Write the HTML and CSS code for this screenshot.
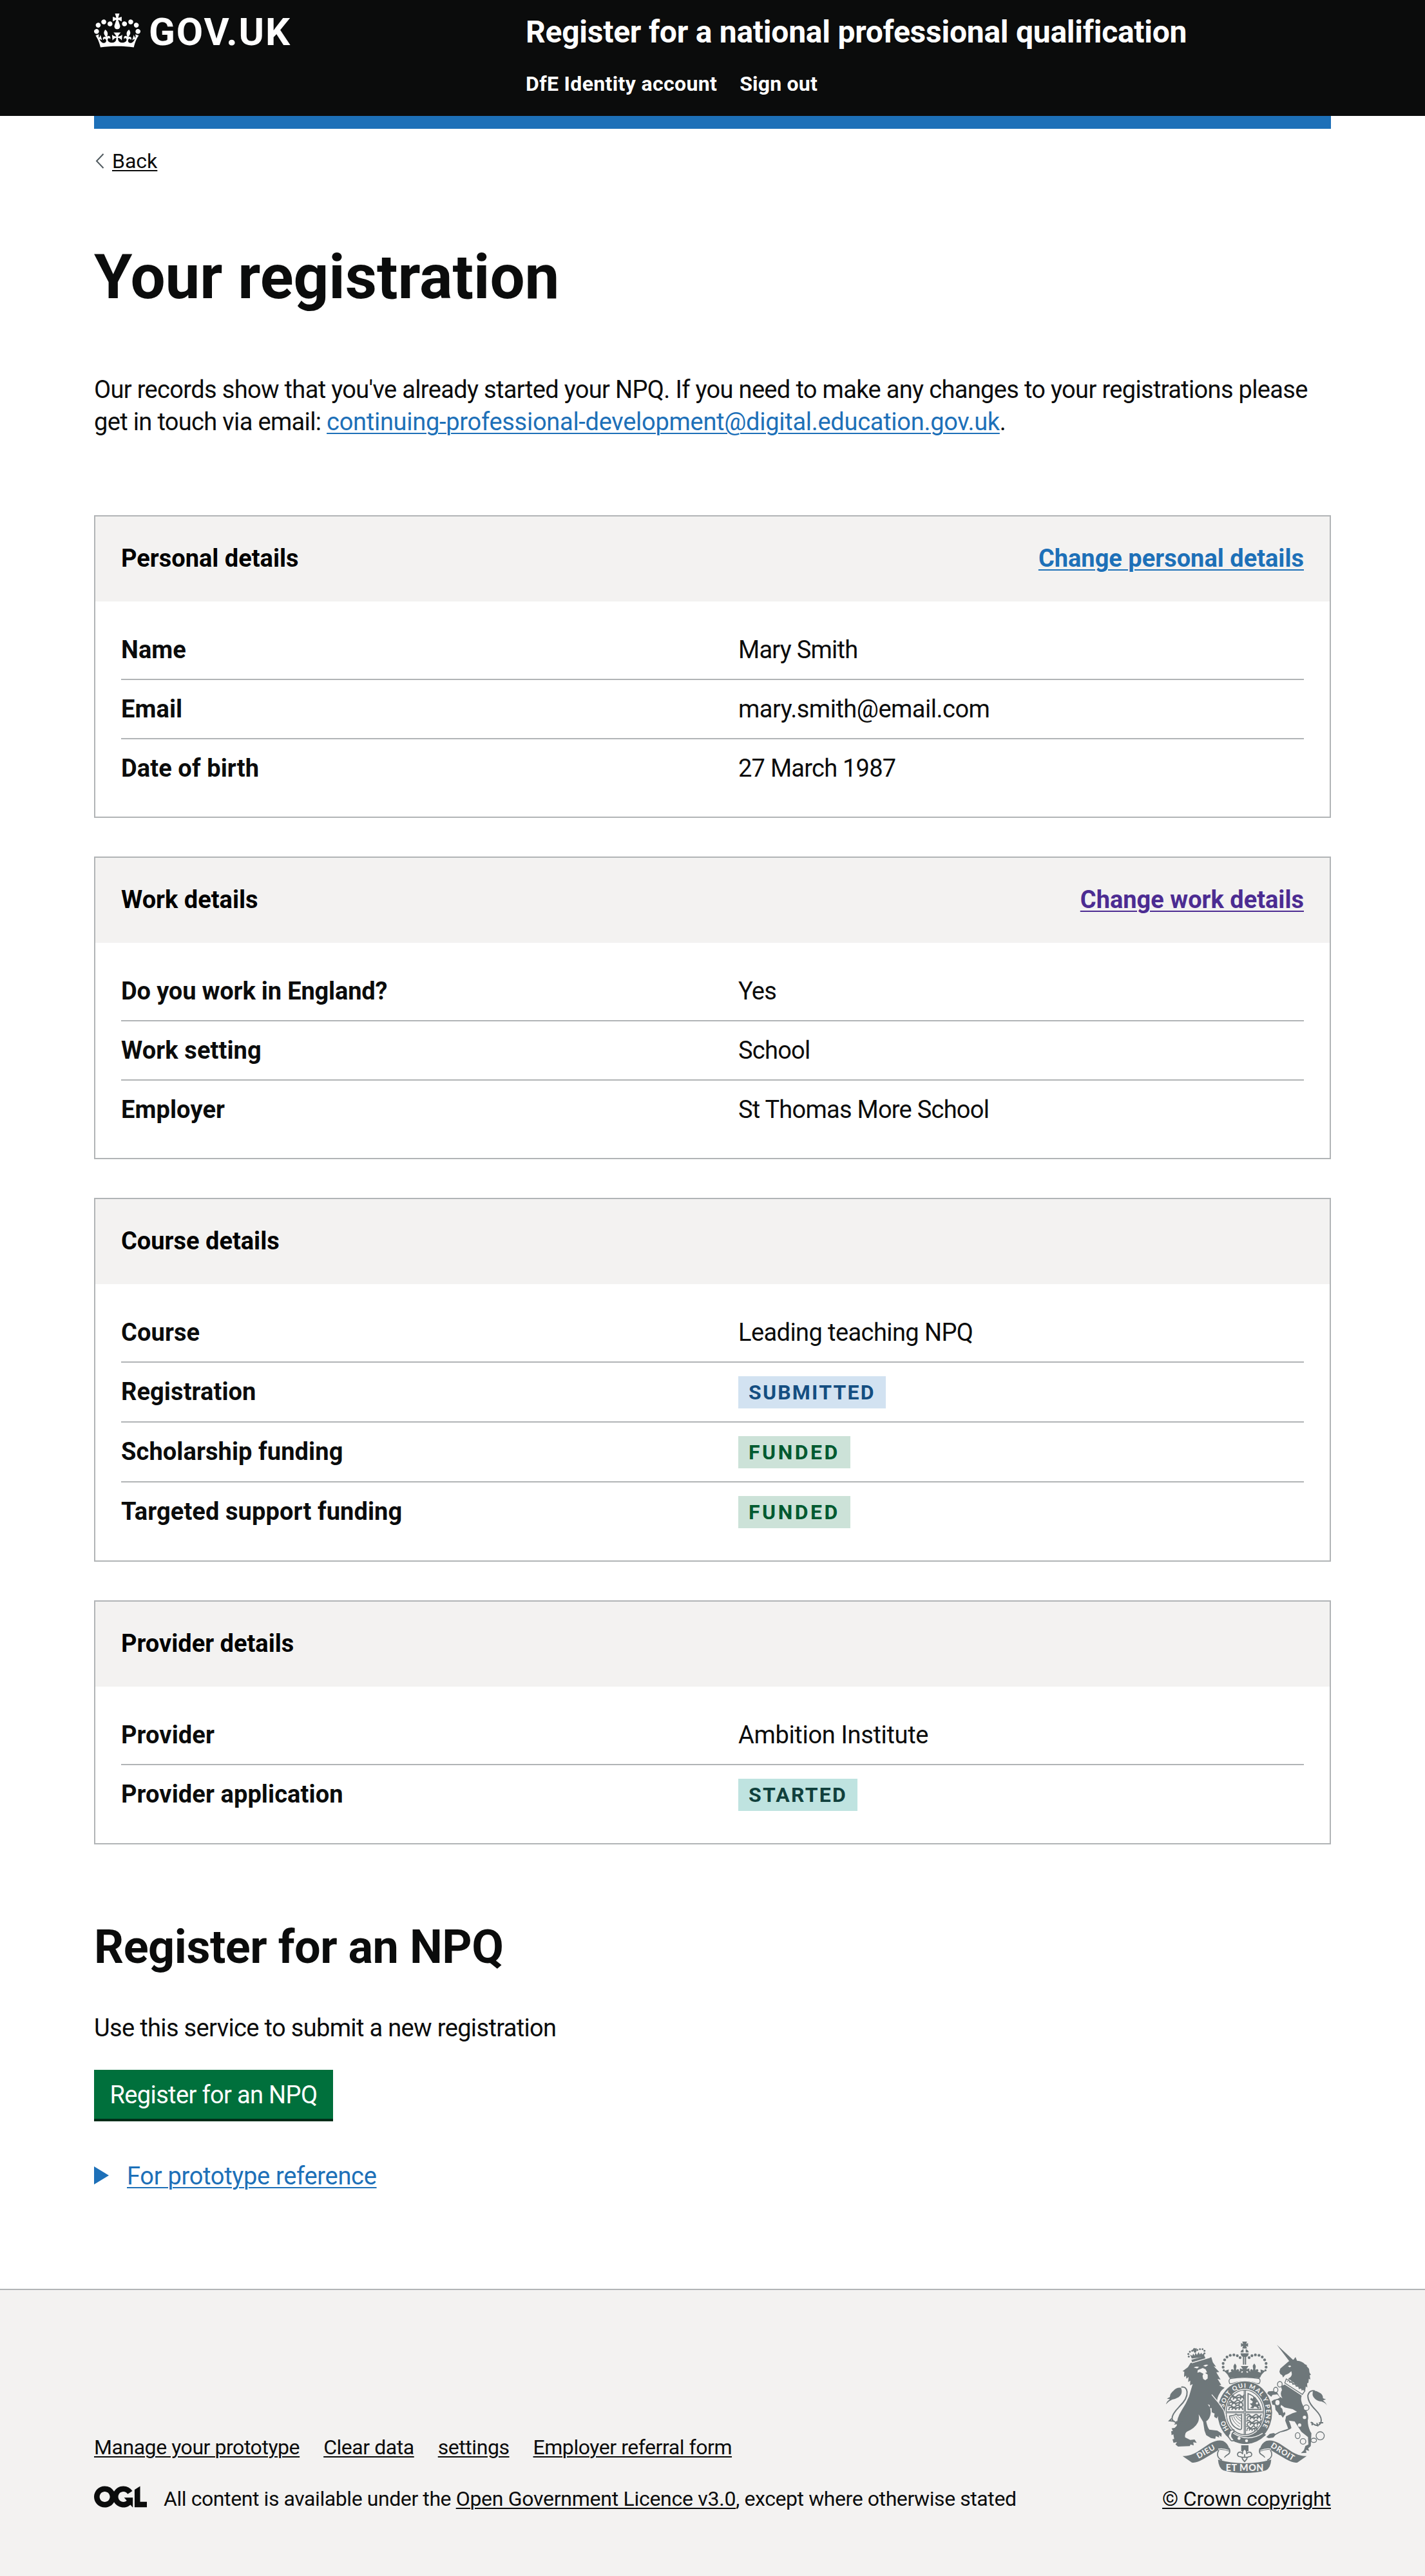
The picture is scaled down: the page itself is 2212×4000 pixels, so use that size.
FILE: index.html
```html
<!DOCTYPE html>
<html lang="en">
<head>
<meta charset="utf-8">
<title>Your registration - Register for a national professional qualification</title>
<link rel="stylesheet" href="styles.css">
</head>
<body>
<header class="header">
  <div class="width header-inner">
    <a class="logo" href="#">
      <svg class="crown" viewBox="0 0 132 97" aria-hidden="true"><path fill="currentColor" fill-rule="evenodd" d="M25 30.2c3.5 1.5 7.7-.2 9.1-3.7 1.5-3.6-.2-7.8-3.9-9.2-3.6-1.4-7.6.3-9.1 3.9-1.4 3.5.3 7.5 3.9 9zM9 39.5c3.6 1.5 7.8-.2 9.2-3.7 1.5-3.6-.2-7.8-3.9-9.1-3.6-1.5-7.6.2-9.1 3.8-1.4 3.5.3 7.5 3.8 9zM4.4 57.2c3.5 1.5 7.7-.2 9.1-3.8 1.5-3.6-.2-7.7-3.9-9.1-3.5-1.5-7.6.3-9.1 3.8-1.4 3.5.3 7.6 3.9 9.1zm38.3-21.4c3.5 1.5 7.7-.2 9.1-3.8 1.5-3.6-.2-7.7-3.9-9.1-3.6-1.5-7.6.3-9.1 3.8-1.3 3.6.4 7.7 3.9 9.1zm64.4-5.6c-3.6 1.5-7.8-.2-9.1-3.7-1.5-3.6.2-7.8 3.8-9.2 3.6-1.4 7.7.3 9.2 3.9 1.3 3.5-.4 7.5-3.9 9zm15.9 9.3c-3.6 1.5-7.7-.2-9.1-3.7-1.5-3.6.2-7.8 3.7-9.1 3.6-1.5 7.7.2 9.2 3.8 1.5 3.5-.3 7.5-3.8 9zm4.7 17.7c-3.6 1.5-7.8-.2-9.2-3.8-1.5-3.6.2-7.7 3.9-9.1 3.6-1.5 7.7.3 9.2 3.8 1.3 3.5-.4 7.6-3.9 9.1zM89.3 35.8c-3.6 1.5-7.8-.2-9.2-3.8-1.4-3.6.2-7.7 3.9-9.1 3.6-1.5 7.7.3 9.2 3.8 1.4 3.6-.3 7.7-3.9 9.1zM69.7 17.7l8.9 4.7V9.3l-8.9 2.8c-.2-.3-.5-.6-.9-.9L72.4 0H59.6l3.5 11.2c-.3.3-.6.5-.9.9l-8.8-2.8v13.1l8.8-4.7c.3.3.6.7.9.9l-5 15.4v.1c-.2.8-.4 1.6-.4 2.4 0 4.1 3.1 7.5 7 8.1h.2c.3 0 .7.1 1 .1.4 0 .7 0 1-.1h.2c4-.6 7.1-4.1 7.1-8.1 0-.8-.1-1.7-.4-2.4V34l-5.1-15.4c.4-.2.7-.6 1-.9zM66 92.8c16.9 0 32.8 1.1 47.1 3.2 4-16.9 8.9-26.7 14-33.5l-9.6-3.4c1 4.9 1.1 7.2 0 10.2-1.5-1.4-3-4.3-4.2-8.7L108.6 76c2.8-2 5-3.2 7.5-3.3-4.4 9.4-10 11.9-13.6 11.2-4.3-.8-6.3-4.6-5.6-7.9 1-4.7 5.7-5.9 8-.5 4.3-8.7-3-11.4-7.6-8.8 7.1-7.2 7.9-13.5 2.1-21.1-8 6.1-8.1 12.3-4.5 20.8-4.7-5.4-12.1-2.5-9.5 6.2 3.4-5.2 7.9-2 7.2 3.1-.6 4.3-6.4 7.8-13.5 7.2-10.3-.9-10.9-8-11.2-13.8 2.5-.5 7.1 1.8 11 7.3L80.2 60c-4.1 4.4-8 5.3-12.3 5.4 1.4-4.4 8-11.6 8-11.6H55.5s6.4 7.2 7.9 11.6c-4.2-.1-8-1-12.3-5.4l1.4 16.4c3.9-5.5 8.5-7.7 10.9-7.3-.3 5.8-.9 12.8-11.1 13.8-7.2.6-12.9-2.9-13.5-7.2-.7-5 3.8-8.3 7.1-3.1 2.7-8.7-4.6-11.6-9.4-6.2 3.7-8.5 3.6-14.7-4.6-20.8-5.8 7.6-5 13.9 2.2 21.1-4.7-2.6-11.9.1-7.7 8.8 2.3-5.5 7.1-4.2 8.1.5.7 3.3-1.3 7.1-5.7 7.9-3.5.7-9-1.8-13.5-11.2 2.5.1 4.7 1.3 7.5 3.3l-4.7-15.4c-1.2 4.4-2.7 7.2-4.3 8.7-1.1-3-.9-5.3 0-10.2l-9.5 3.4c5 6.9 9.9 16.7 14 33.5 14.8-2.1 30.8-3.2 47.7-3.2z"/></svg>
      <span class="logo-text">GOV.UK</span>
    </a>
    <div class="header-content">
      <a class="service-name" href="#">Register for a national professional qualification</a>
      <nav class="header-nav"><a class="nav-account" href="#">DfE Identity account</a><a class="nav-signout" href="#">Sign out</a></nav>
    </div>
  </div>
</header>
<div class="width"><div class="header-bar"></div></div>

<div class="width page">
  <a class="back" href="#"><svg class="chevron" viewBox="0 0 14 24" aria-hidden="true"><path d="M12.5 1 2 12l10.500 11" fill="none" stroke="#505a5f" stroke-width="2"/></svg><span class="back-text">Back</span></a>
  <main>
    <h1>Your registration</h1>
    <p class="intro">Our records show that you've already started your NPQ. If you need to make any changes to your registrations please<br>get in touch via email: <a class="link mail" href="#">continuing-professional-development@digital.education.gov.uk</a>.</p>

    <section class="card">
      <div class="card-head"><h2 class="card-title">Personal details</h2><a class="link" href="#">Change personal details</a></div>
      <dl class="rows">
        <div class="row"><dt>Name</dt><dd>Mary Smith</dd></div>
        <div class="row"><dt>Email</dt><dd class="value-mail">mary.smith@email.com</dd></div>
        <div class="row"><dt>Date of birth</dt><dd>27 March 1987</dd></div>
      </dl>
    </section>

    <section class="card">
      <div class="card-head"><h2 class="card-title">Work details</h2><a class="link visited" href="#">Change work details</a></div>
      <dl class="rows">
        <div class="row"><dt class="question">Do you work in England?</dt><dd>Yes</dd></div>
        <div class="row"><dt>Work setting</dt><dd>School</dd></div>
        <div class="row"><dt>Employer</dt><dd>St Thomas More School</dd></div>
      </dl>
    </section>

    <section class="card">
      <div class="card-head"><h2 class="card-title">Course details</h2></div>
      <dl class="rows">
        <div class="row"><dt>Course</dt><dd class="value-course">Leading teaching NPQ</dd></div>
        <div class="row"><dt>Registration</dt><dd><strong class="tag tag-blue">SUBMITTED</strong></dd></div>
        <div class="row"><dt>Scholarship funding</dt><dd><strong class="tag tag-green">FUNDED</strong></dd></div>
        <div class="row"><dt>Targeted support funding</dt><dd><strong class="tag tag-green">FUNDED</strong></dd></div>
      </dl>
    </section>

    <section class="card">
      <div class="card-head"><h2 class="card-title">Provider details</h2></div>
      <dl class="rows">
        <div class="row"><dt>Provider</dt><dd class="value-provider">Ambition Institute</dd></div>
        <div class="row"><dt>Provider application</dt><dd><strong class="tag tag-teal">STARTED</strong></dd></div>
      </dl>
    </section>

    <h2 class="section-title">Register for an NPQ</h2>
    <p class="lead">Use this service to submit a new registration</p>
    <a class="button" href="#">Register for an NPQ</a>
    <div class="details"><svg class="triangle" viewBox="0 0 23 28" aria-hidden="true"><path d="M0 0 23 14 0 28z" fill="currentColor"/></svg><a class="link details-text" href="#">For prototype reference</a></div>
  </main>
</div>

<footer class="footer">
  <div class="width footer-inner">
    <div class="footer-main">
      <nav class="footer-links"><a href="#">Manage your prototype</a><a href="#">Clear data</a><a href="#">settings</a><a href="#">Employer referral form</a></nav>
      <div class="licence">
        <svg class="ogl" viewBox="0 0 483.200 195.700" role="img" aria-label="Open Government Licence"><path fill="currentColor" d="M421.5 142.8V.1l-50.7 32.3v161.1h112.4v-50.7zm-122.3-9.6A47.12 47.12 0 0 1 221 97.8c0-26 21.1-47.1 47.1-47.1 16.7 0 31.4 8.7 39.7 21.8l42.7-27.2A97.63 97.63 0 0 0 268.1 0c-36.5 0-68.3 20.1-85.1 49.7A98 98 0 0 0 97.8 0C43.900 0 0 43.900 0 97.800s43.900 97.800 97.800 97.800c36.500 0 68.300-20.100 85.100-49.700a97.760 97.760 0 0 0 149.600 25.400l19.400 22.200h3v-87.800h-80l24.300 27.500zM97.800 145c-26 0-47.100-21.100-47.100-47.100s21.100-47.100 47.100-47.100 47.100 21.100 47.100 47.100S123.800 145 97.800 145"/></svg>
        <span class="licence-text">All content is available under the <a class="licence-link" href="#">Open Government Licence v3.0</a>, except where otherwise stated</span>
      </div>
    </div>
    <a class="copyright" href="#">
      <svg class="crest" viewBox="30 30 750 618" role="img" aria-label="Royal coat of arms">
        <defs>
          <path id="motto" d="M327 446A99 116 0 0 1 397 248A99 116 0 0 1 467 446"/>
          <g id="beast" fill="none" stroke="currentColor" stroke-width="6"><path d="M0 8q10-10 18 0t18 0t18 0t16-6M4 17q10-8 16-3t16 3t16-3t16 3M6 19l-4 7M22 17l-5 8M38 19l-4 7M54 17l-4 8M66 17l2 8"/></g>
          <g id="crown-side">
            <circle cx="296" cy="152" r="6.500"/><circle cx="296" cy="135" r="6.500"/><circle cx="303" cy="118" r="6.500"/><circle cx="314" cy="105" r="6.500"/><circle cx="329" cy="97" r="6.500"/><circle cx="346" cy="95" r="6.500"/><circle cx="362" cy="99" r="6.500"/><circle cx="375" cy="108" r="6.500"/><circle cx="299" cy="167" r="5"/>
            <path d="M300 170l22-7-1 15 14-5q-7-8 2-12 6 0 8 6 2-8-1-16 0-8 7-16 8 8 7 16-3 8-1 16 3-6 8-6 9 4 3 12l12-7v35h-56q-6-17-24-31z"/>
          </g>
          <g id="ribbon">
            <path d="M107 566q30 2 66-18l61-40q35-20 62-12 20 10 28 34 3 9 2 16-28-12-51-8l-70 42q-35 20-55 16-20-14-43-30z"/>
            <path d="M276 539q-9 14-5 27 4 12 20 20M324 530q9 22-9 31-10 6-13 12" fill="none" stroke="currentColor" stroke-width="5"/>
            <path d="M273 534q20-6 50 6" fill="none" stroke="#f3f2f1" stroke-width="4"/>
          </g>
        </defs>
        <g fill="currentColor">
          <!-- royal crown -->
          <path d="M385 33h22l-4 11 9-4v17l-9-4 4 12h-22l4-12-10 4V40l10 4zM377 83q1-11 14-15v15zM415 83q-1-11-14-15v15zM377 88h38q-2 16-12 16v36h-6v-36h-3v36h-6v-36q-9-2-11-16z"/>
          <use href="#crown-side"/><use href="#crown-side" transform="translate(792 0) scale(-1 1)"/>
          <path d="M378 147h36l-10 15 14-4v17l-14-5 3 15h-22l3-15-14 5v-17l14 4zM324 184q72-14 144 0l-3 20q-69-11-138 0z"/>
          <path d="M328 206q68-12 137 0 7 11-1 22l-10 1q-58-22-117 0h-10q-8-13 1-23z" fill="none" stroke="currentColor" stroke-width="4"/>
          <!-- lion -->
          <path d="M132 152l12-19 97-27 7 24 15 20-11-2 26 27-14 1 20 34-14-3 17 28-10 2 26 11q-17 12-22 24-14 20-14 47l30 44 4 32-14-2-2-10-3 11-10-5-4-12-6 8-8-8 4-12-15-6 3-17-14 2 2-15-10-4q15 18 14 40-3 28-21 39 6 30 15 39l37 5 20 13-1 16-12-8 2 11-16-7-3 13-20-4-22-13-8-22-6-40-21-35q4 25-4 38-14 27-50 42-12 8-9 27l24 12 20-2 10 16-16-3 2 15-15-5-3 8-55 2-12-10 7-11-16 4-5-17 8-1-4-22-8 4-2-18 8-2-6-12 14-2 10-10q0-36 22-70 22-33 35-66l17-58-12 6 1-22-10 6 2-23-10 8-2-14-9 6 1-25-8-2z"/>
          <path d="M148 118l62-17 4 12-62 17z"/>
          <path d="M150 112l-8-18 10 5 5-10 6 10 4-14 7 10 8-13 5 11 8-8 3 8 9-5 2 16z"/>
          <g><circle cx="136" cy="103" r="4.500"/><circle cx="134" cy="91" r="4.500"/><circle cx="141" cy="80" r="4.500"/><circle cx="152" cy="76" r="4.500"/><circle cx="176" cy="72" r="4.500"/><circle cx="188" cy="68" r="4.500"/><circle cx="200" cy="68" r="4.500"/><circle cx="209" cy="76" r="4.500"/><circle cx="209" cy="88" r="4.500"/><path d="M160 62l6 3 6-2 1 10-4 12h-7l-4-8-5-5z"/></g>
          <path d="M159 154q10-8 25-3l-9 7zM203 146q12-9 24-4l-12 8zM178 166l23-10 13 6 7 14-9 3 12 8v18l-11 8-10-6-3-14 4-10-16-8-12 3z" fill="#f3f2f1"/>
          <path d="M150 132l84-25" fill="none" stroke="#f3f2f1" stroke-width="4"/>
          <path d="M110 409q-45 8-52-16-2-20 33-56 40-38 37-70-4-26-27-22M56 392l-10 10 24 2M82 404l-8 12 26-5" fill="none" stroke="currentColor" stroke-width="6"/>
          <path d="M29 326q4-14 19-25l-14-2 14-8q0-16 17-29 12-16 35-14 10 28-11 44-13 8-30 11-17 7-30 23z"/>
          <!-- unicorn -->
          <path d="M546 48l80 74-19 6zM558 173l4-14 38-33q12-9 24-9l9-12 7 17q25 2 36 16l12 6-4 2 12 14 2 16 7 12-6 2 3 20-7-4-2 19-6 2 1 20-7-5-3 20-30-20-49-37q24-10 14-34-10 12-28 17l-10 12-4-10-9-6z"/>
          <path d="M598 148q8-7 15 0l-7 5z" fill="#f3f2f1"/>
          <path d="M590 207l87 55-12 17-82-53zM594 219l8-8 4 12 10-4 5 13 11-4 4 13 11-3 3 14 12-3 1 12" fill="#f3f2f1" stroke="currentColor" stroke-width="4"/>
          <path d="M565 240l18-7 79 52q-10 23 13 58 23 31 15 57 0 28 12 52l5 8-3 60-12 10 5 12-16-4 3 13-26 2 14-14 7-20 14-7-2-34-31-25-16-25-15-23-27-4q10 22 12 35-15 14-52 20l-22 12-10 12-22 3-11-5 16-15 18-4 8 4 18-10 42-14-14-38 4-20 30-14 21-7-20-12-38-8-16-12-3 10 8 8 5 20 7-6 3 10-12 18-8-12-10-1-4-10-12-14-3-22-12-3-4-15 12-7 14-3 14-7-13-15-22 2-6 9-13-11-8-2 8-12 21-2 20 8 10 18 14 8q-14-20-2-38z"/>
          <path d="M704 408q30 26 44 8 16-26-21-64-40-40-36-70 8-25 32-19M712 408l-2 15M732 412l6 16M742 412l20-1" fill="none" stroke="currentColor" stroke-width="6"/>
          <path d="M780 331q-4-12-19-24l14-5-14-5q0-20-18-27-10-8-27-9-11 21 8 39 14 12 30 12 16 4 26 19z"/>
          <g fill="#f3f2f1"><circle cx="675" cy="386" r="8"/><circle cx="652" cy="422" r="8"/></g>
          <g fill="#f3f2f1" stroke="currentColor" stroke-width="4"><ellipse cx="560" cy="232" rx="11" ry="13"/><ellipse cx="541" cy="258" rx="10" ry="12"/><ellipse cx="549" cy="317" rx="12" ry="14"/><circle cx="683" cy="341" r="13"/><ellipse cx="643" cy="471" rx="11" ry="14"/><circle cx="668" cy="498" r="13"/><ellipse cx="718" cy="493" rx="13" ry="10"/><circle cx="748" cy="472" r="19"/></g>
          <!-- garter and shield -->
          <ellipse cx="397" cy="365" rx="132" ry="150" fill="#f3f2f1"/>
          <ellipse cx="397" cy="364" rx="127" ry="146"/>
          <ellipse cx="397" cy="363" rx="93" ry="110" fill="#f3f2f1"/>
          <ellipse cx="397" cy="363" rx="87" ry="104" fill="none" stroke="currentColor" stroke-width="4"/>
          <path d="M392 260h10v205h-10zM310 358h174v9H310z"/>
          <path d="M397 260v205M310 362.500h174" stroke="#f3f2f1" stroke-width="2"/>
          <g transform="translate(319 280)"><use href="#beast" x="6" y="-2"/><use href="#beast" y="23"/><use href="#beast" y="46"/></g>
          <g transform="translate(404 370)"><use href="#beast"/><use href="#beast" y="27"/><use href="#beast" transform="translate(0 53) scale(.75 1)"/></g>
          <path d="M412 275q45 15 60 74h-60z" fill="none" stroke="currentColor" stroke-width="5"/>
          <path d="M422 342l9-9-11-11 11-2 3-8-12-9 4-8 8 5 3-10 11 3-1 11 9 8-9 9 7 6 8-9 5 10-8 8 8 7-10 3-5-8-10-3-6 9z"/>
          <path d="M326 380q25-4 29-9 14 8 27 2v62q0 9-9 8-43-13-47-63z" fill="none" stroke="currentColor" stroke-width="5"/>
          <path d="M336 383q6 27 37 47M345 381q7 22 31 36M354 379q6 14 25 25M362 378q5 8 18 14" fill="none" stroke="currentColor" stroke-width="3"/>
          <path d="M320 452q76 65 162 8l14 7q-88 84-188 2z"/>
          <path d="M340 458q70 46 140 2" fill="none" stroke="#f3f2f1" stroke-width="4"/>
          <text class="motto"><textPath href="#motto" startOffset="6">HO</textPath></text>
          <text class="motto"><textPath href="#motto" startOffset="112" textLength="382">SOIT QUI MAL Y PENSE</textPath></text>
          <path d="M346 444q-23 0-20 16-12 14 0 24 6 17 22 9l-12-17q-1-19 10-22z" fill="#f3f2f1" stroke="currentColor" stroke-width="5"/>
          <circle cx="370" cy="484" r="7" fill="#f3f2f1"/><circle cx="405" cy="495" r="7" fill="#f3f2f1"/>
          <!-- lion's forepaw over the garter -->
          <path d="M240 280l36 36 24 36 9 38-12 4-6-12-3 16-11-4-5-14-6 11-12-8 5-13-16-8z"/>
          <path d="M243 280l32 38 24 35 11 40" fill="none" stroke="#f3f2f1" stroke-width="4"/>
          <!-- scroll -->
          <path d="M380 516h34v28h-34z"/>
          <path d="M396 533q-12 9-9 24-8-14-20-7-9 10 1 18l11 2q7 2 7 10l10 12 10-12q0-8 7-10l11-2q10-8 1-18-12-7-20 7 3-15-9-24zM380 572h33M396 557v14" fill="#f3f2f1" stroke="currentColor" stroke-width="5"/>
          <use href="#ribbon"/><use href="#ribbon" transform="translate(792 0) scale(-1 1)"/>
          <path d="M272 583q60 17 124 17t124-17q-3 40-25 50-40 12-99 12t-99-12q-22-10-25-50z"/>
        </g>
        <text class="scroll-text" text-anchor="middle" textLength="92" transform="translate(221 556) rotate(-30)">DIEU</text>
        <text class="scroll-text" text-anchor="middle" textLength="122" transform="translate(567 556) rotate(32)">DROIT</text>
        <text class="scroll-text scroll-main" x="396" y="635" text-anchor="middle" textLength="176">ET MON</text>
      </svg>
      <span class="copyright-text">© Crown copyright</span>
    </a>
  </div>
</footer>
</body>
</html>
```
FILE: styles.css
```css
* { box-sizing: border-box; }
body {
  margin: 0;
  min-height: 4000px;
  display: flex;
  flex-direction: column;
  background: #fff;
  color: #0b0c0c;
  font: 38px/50px Roboto, "Liberation Sans", sans-serif;
}
h1, h2, p, dl, dd { margin: 0; }
.width { width: 1920px; margin: 0 auto; }

.header { height: 180px; padding-top: 20px; background: #0b0c0c; }
.header a { color: #fff; text-decoration: none; }
.header-inner { display: flex; }
.logo { display: flex; width: 670px; height: 60px; gap: 13px; }
.crown { width: 72px; height: 53px; margin-top: 1px; }
.logo-text { font-size: 60px; line-height: 60px; font-weight: 700; letter-spacing: 1.900px; }
.header-content { display: flex; flex-direction: column; gap: 30px; }
.service-name { font-size: 48px; line-height: 60px; font-weight: 700; letter-spacing: -.25px; white-space: nowrap; }
.header-nav { display: flex; gap: 35px; font-size: 32px; line-height: 40px; font-weight: 700; }
.nav-account { letter-spacing: .35px; }
.nav-signout { letter-spacing: .2px; }
.header-bar { height: 20px; background: #1d70b8; }

.page { padding-top: 30px; padding-bottom: 150px; }
.back { display: flex; gap: 14px; color: #0b0c0c; font-size: 32px; line-height: 40px; text-decoration: none; }
.chevron { width: 14px; height: 24px; margin: 8px -2px 0 2px; }
.back-text { text-decoration: underline 2px; text-underline-offset: 3px; }
h1 { margin-top: 110px; font-size: 96px; line-height: 100px; font-weight: 700; }
.intro { margin-top: 100px; margin-bottom: 120px; letter-spacing: -.66px; white-space: nowrap; }
.link { color: #1d70b8; text-decoration: underline 2px; text-underline-offset: 4px; }
.mail { letter-spacing: -.28px; }
.visited { color: #4c2c92; }

.card { margin-bottom: 60px; border: 2px solid #b1b4b6; }
.card-head { display: flex; justify-content: space-between; height: 132px; padding: 40px; background: #f3f2f1; font-weight: 700; }
.card-title { font-size: 38px; font-weight: 700; color: #000; }
.rows { padding: 30px 40px; }
.row { display: grid; grid-template-columns: 958px 1fr; padding: 20px 0; border-bottom: 2px solid #b1b4b6; }
.row:last-child { border-bottom: 0; }
dt { font-weight: 700; letter-spacing: .1px; }
.question { letter-spacing: -.15px; }
dd { letter-spacing: -.75px; }
.value-mail { letter-spacing: -.5px; }
.value-course { letter-spacing: -.58px; }
.value-provider { letter-spacing: -.33px; }
.tag { display: block; width: fit-content; margin-top: 1px; padding: 1px 16px 0; font-size: 32px; line-height: 49px; font-weight: 700; letter-spacing: 2.200px; }
.tag-blue { background: #d2e2f1; color: #144e81; }
.tag-green { background: #cce2d8; color: #005a30; letter-spacing: 3.500px; }
.tag-teal { background: #bfe3e0; color: #10403c; }

.section-title { margin-top: 120px; font-size: 72px; line-height: 80px; font-weight: 700; letter-spacing: -.45px; }
.lead { margin: 60px 0 40px; letter-spacing: -.65px; }
.button { display: block; width: 371px; height: 80px; padding-top: 14px; border-bottom: 4px solid #002d18; background: #00703c; color: #fff; text-align: center; text-decoration: none; letter-spacing: -.65px; }
.details { display: flex; gap: 28px; margin-top: 60px; color: #1d70b8; }
.triangle { width: 23px; height: 28px; margin-top: 10px; }
.details-text { letter-spacing: -.3px; }

.footer { flex: 1; border-top: 2px solid #b1b4b6; background: #f3f2f1; font-size: 32px; line-height: 40px; padding-top: 79px; }
.footer a { color: #0b0c0c; text-decoration: underline 2px; text-underline-offset: 3px; }
.footer-inner { display: flex; justify-content: space-between; align-items: flex-end; }
.footer-main { display: flex; flex-direction: column; gap: 40px; }
.footer-links { display: flex; gap: 37px; letter-spacing: -.45px; }
.licence { display: flex; gap: 26px; }
.ogl { width: 82px; height: 34px; }
.licence-text { letter-spacing: -.42px; white-space: nowrap; }
.licence-link { letter-spacing: -.28px; }
.footer .copyright { display: flex; flex-direction: column; align-items: center; gap: 19px; text-decoration: none; }
.crest { width: 250px; height: 206px; color: #6e777a; }
.copyright-text { letter-spacing: -.18px; text-decoration: underline 2px; text-underline-offset: 3px; }
.motto { font: 900 29px Lato, sans-serif; fill: #f3f2f1; }
.scroll-text { font: 900 36px Lato, sans-serif; fill: #f3f2f1; }
.scroll-main { font-size: 43px; }
```
